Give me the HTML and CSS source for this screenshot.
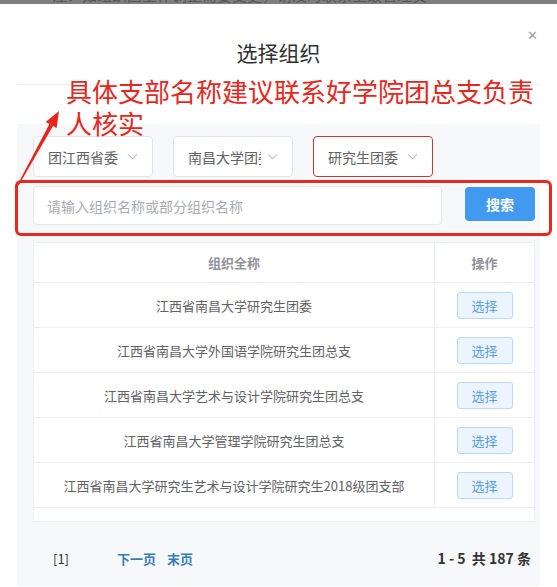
FILE: index.html
```html
<!DOCTYPE html>
<html lang="zh-CN">
<head>
  <meta charset="UTF-8" />
  <meta name="viewport" content="width=device-width, initial-scale=1.0" />
  <title>选择组织</title>
  <link rel="stylesheet" href="styles.css">
</head>
<body>
  <!-- Page behind the dialog -->
  <div class="backdrop-strip">
    <span>注：如组织因工作调整需要变更，请及时联系上级管理员</span>
  </div>

  <!-- Dialog -->
  <div class="dialog">
    <div class="dialog-header">
      <h2 class="dialog-title">选择组织</h2>
      <span class="dialog-close">&#x2715;</span>
    </div>

    <div class="dialog-gap"></div>

    <div class="panel">
      <!-- Cascading selects -->
      <div class="select-row">
        <div class="select"><span class="select-text">团江西省委</span><i class="chevron"></i></div>
        <div class="select"><span class="select-text">南昌大学团委</span><i class="chevron"></i></div>
        <div class="select select-active"><span class="select-text">研究生团委</span><i class="chevron"></i></div>
      </div>

      <!-- Search -->
      <div class="search-row">
        <div class="search-input">请输入组织名称或部分组织名称</div>
        <button class="search-btn">搜索</button>
      </div>

      <!-- Result table -->
      <div class="table">
        <div class="row head">
          <div class="cell name">组织全称</div>
          <div class="cell op">操作</div>
        </div>
        <div class="row">
          <div class="cell name">江西省南昌大学研究生团委</div>
          <div class="cell op"><span class="pick">选择</span></div>
        </div>
        <div class="row">
          <div class="cell name">江西省南昌大学外国语学院研究生团总支</div>
          <div class="cell op"><span class="pick">选择</span></div>
        </div>
        <div class="row">
          <div class="cell name">江西省南昌大学艺术与设计学院研究生团总支</div>
          <div class="cell op"><span class="pick">选择</span></div>
        </div>
        <div class="row">
          <div class="cell name">江西省南昌大学管理学院研究生团总支</div>
          <div class="cell op"><span class="pick">选择</span></div>
        </div>
        <div class="row">
          <div class="cell name">江西省南昌大学研究生艺术与设计学院研究生2018级团支部</div>
          <div class="cell op"><span class="pick">选择</span></div>
        </div>
        <div class="table-foot"></div>
      </div>

      <!-- Pager -->
      <div class="pager">
        <span class="page-current">[1]</span>
        <span class="page-link next">下一页</span>
        <span class="page-link">末页</span>
        <span class="page-total">1 - 5 &nbsp;共 187 条</span>
      </div>
    </div>

    <!-- Annotation drawn over the screenshot -->
    <div class="note">具体支部名称建议联系好学院团总支负责<br>人核实</div>
    <svg class="note-arrow" width="70" height="190" viewBox="0 0 70 190">
      <polygon points="17.4,181 49.4,120 45.6,118 59,107 56.6,124 53,122 18.6,181.4" fill="#e8261c" />
    </svg>
    <div class="note-box"></div>
  </div>
</body>
</html>
```

FILE: styles.css
```css
/* General */
body {
  margin: 0;
  background: #fff;
  font-family: 'Noto Sans CJK SC', 'Noto Sans', sans-serif;
  color: #606266;
  overflow: hidden;
}

/* Strip of the page behind the dialog */
.backdrop-strip {
  height: 4px;
  background: #7f7f7f;
  overflow: hidden;
  padding-left: 52px;
}
.backdrop-strip span {
  display: block;
  margin-top: -13px;
  font-size: 15px;
  line-height: 16px;
  color: #555;
}

/* Dialog */
.dialog {
  position: relative;
  height: 583px;
  background: #fff;
}
.dialog-header {
  margin: 0 17px;
  padding: 33px 0 17px;
  border-bottom: 1px solid #eef0f3;
  text-align: center;
}
.dialog-title {
  margin: 0;
  font-size: 21px;
  line-height: 30px;
  font-weight: 400;
  color: #303133;
}
.dialog-close {
  position: absolute;
  top: 21px;
  right: 19px;
  font-size: 13px;
  color: #a0a0a0;
}
.dialog-gap {
  height: 39px;
}

/* Gray panel */
.panel {
  margin: 0 17px;
  padding: 12px 5px 0 16px;
  height: 450px;
  background: #f7f8fa;
}

/* Selects */
.select-row {
  display: flex;
  gap: 20px;
}
.select {
  width: 120px;
  height: 41px;
  box-sizing: border-box;
  display: flex;
  align-items: center;
  padding: 0 12px 0 14px;
  background: #fff;
  border: 1px solid #e1e4ea;
  border-radius: 4px;
}
.select-active {
  border-color: #c0393b;
}
.select-text {
  flex: 1;
  font-size: 14px;
  white-space: nowrap;
  overflow: hidden;
  color: #606266;
}
.chevron {
  width: 6px;
  height: 6px;
  margin: 0 4px 4px 8px;
  border-right: 1px solid #c0c4cc;
  border-bottom: 1px solid #c0c4cc;
  transform: rotate(45deg);
}

/* Search */
.search-row {
  display: flex;
  align-items: flex-start;
  margin-top: 9px;
}
.search-input {
  width: 410px;
  height: 39px;
  box-sizing: border-box;
  padding: 0 13px;
  font-size: 14px;
  line-height: 38px;
  color: #a8abb2;
  background: #fff;
  border: 1px solid #e4e7ed;
  border-radius: 4px;
}
.search-btn {
  margin: 1px 0 0 23px;
  width: 70px;
  height: 34px;
  border: 0;
  border-radius: 4px;
  background: #4199f0;
  color: #fff;
  font-family: inherit;
  font-size: 14px;
  font-weight: 700;
}

/* Table */
.table {
  margin-top: 17px;
  width: 502px;
  background: #fff;
  border: 1px solid #ebeef5;
  box-sizing: border-box;
}
.row {
  display: flex;
  height: 45px;
  border-bottom: 1px solid #ebeef5;
  box-sizing: border-box;
}
.row.head {
  height: 40px;
}
.cell {
  display: flex;
  align-items: center;
  justify-content: center;
  font-size: 13px;
}
.cell.name {
  width: 400px;
  border-right: 1px solid #ebeef5;
}
.cell.op {
  flex: 1;
}
.head .cell {
  font-weight: 700;
  color: #909399;
}
.pick {
  width: 54px;
  height: 25px;
  line-height: 25px;
  text-align: center;
  font-size: 13px;
  color: #5a9ee6;
  background: #ecf5ff;
  border: 1px solid #b8d9fb;
  border-radius: 3px;
}
.table-foot {
  height: 13px;
}

/* Pager */
.pager {
  display: flex;
  align-items: center;
  padding: 26px 4px 0 20px;
  font-size: 13px;
}
.page-current {
  color: #333;
  margin-right: 48px;
}
.page-link {
  color: #3a7db5;
  font-weight: 700;
  margin-right: 11px;
}
.page-total {
  margin-left: auto;
  color: #333;
  font-weight: 700;
  font-size: 14px;
}

/* Red annotation over the screenshot */
.note {
  position: absolute;
  top: 71px;
  left: 66px;
  font-size: 26px;
  line-height: 32px;
  color: #e3281e;
}
.note-arrow {
  position: absolute;
  top: 0;
  left: 0;
}
.note-box {
  position: absolute;
  top: 176px;
  left: 15px;
  width: 537px;
  height: 56px;
  box-sizing: border-box;
  border: 3px solid #e52a1f;
  border-radius: 6px;
}
```
